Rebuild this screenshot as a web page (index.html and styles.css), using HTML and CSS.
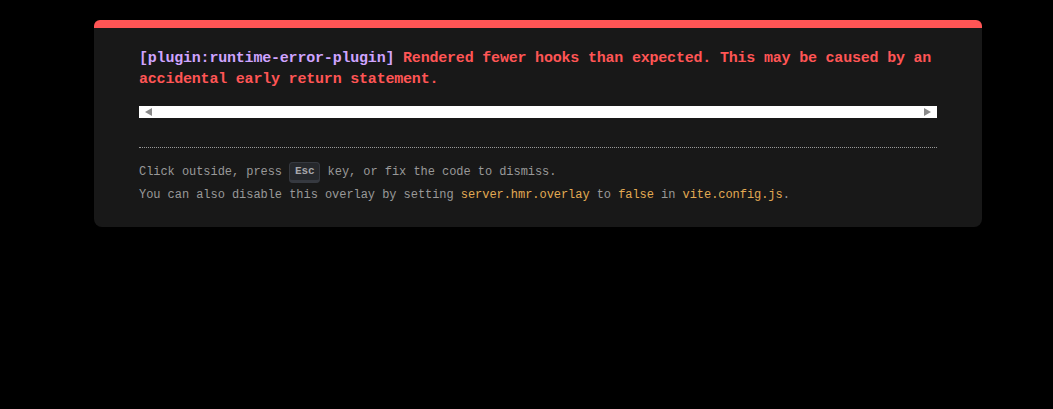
FILE: index.html
```html
<!DOCTYPE html>
<html lang="en">
<head>
<meta charset="utf-8">
<title>Error overlay</title>
<link rel="stylesheet" href="styles.css">
</head>
<body>
<div class="backdrop">
  <div class="window">
    <pre class="message"><span class="plugin">[plugin:runtime-error-plugin]</span> <span class="message-body">Rendered fewer hooks than expected. This may be caused by an accidental early return statement.</span></pre>
    <div class="scrollbar">
      <svg class="arrow" width="7" height="8" viewBox="0 0 7 8"><polygon points="7,0 7,8 0,4" /></svg>
      <svg class="arrow" width="7" height="8" viewBox="0 0 7 8"><polygon points="0,0 0,8 7,4" /></svg>
    </div>
    <div class="tip">
      <div class="tip-line">Click outside, press <kbd>Esc</kbd> key, or fix the code to dismiss.</div>
      <div class="tip-line">You can also disable this overlay by setting <code>server.hmr.overlay</code> to <code>false</code> in <code>vite.config.js</code>.</div>
    </div>
  </div>
</div>
</body>
</html>
```

FILE: styles.css
```css
html, body {
  margin: 0;
  padding: 0;
  background: #000;
  height: 100%;
}

.backdrop {
  padding-top: 20px;
  padding-left: 94px;
}

.window {
  width: 888px;
  box-sizing: border-box;
  background: #181818;
  color: #d8d8d8;
  border-top: 8px solid #ff5555;
  border-radius: 6px 6px 8px 8px;
  padding: 21px 45px 20px 45px;
  font-family: "Liberation Mono", "DejaVu Sans Mono", monospace;
}

.message {
  margin: 0 0 15px 0;
  font-family: "Liberation Mono", "DejaVu Sans Mono", monospace;
  font-size: 15px;
  letter-spacing: -0.2px;
  line-height: 20.8px;
  font-weight: 700;
  white-space: pre-wrap;
  color: #ff5555;
}

.plugin {
  color: #cfa4ff;
}

.message-body {
  color: #ff5555;
}

.scrollbar {
  height: 12px;
  background: #ffffff;
  display: flex;
  align-items: center;
  justify-content: space-between;
  padding: 0 6px 0 6px;
  margin-bottom: 29px;
}

.arrow {
  display: block;
  fill: #8a8a8a;
}

.tip {
  border-top: 1px dotted #999;
  padding-top: 13px;
  font-size: 12px;
  letter-spacing: -0.05px;
  line-height: 23.4px;
  color: #999;
}

.tip-line {
  white-space: nowrap;
}

code {
  font-family: "Liberation Mono", "DejaVu Sans Mono", monospace;
  font-size: 12px;
  color: #e2aa53;
}

kbd {
  font-family: "Liberation Mono", "DejaVu Sans Mono", monospace;
  font-size: 11px;
  line-height: 1.5;
  font-weight: 700;
  background-color: rgb(38, 40, 44);
  color: rgb(166, 167, 171);
  padding: 2.4px 4.8px;
  border-radius: 4px;
  border-style: solid;
  border-width: 1px 1px 3px;
  border-color: rgb(54, 57, 64);
}
```
